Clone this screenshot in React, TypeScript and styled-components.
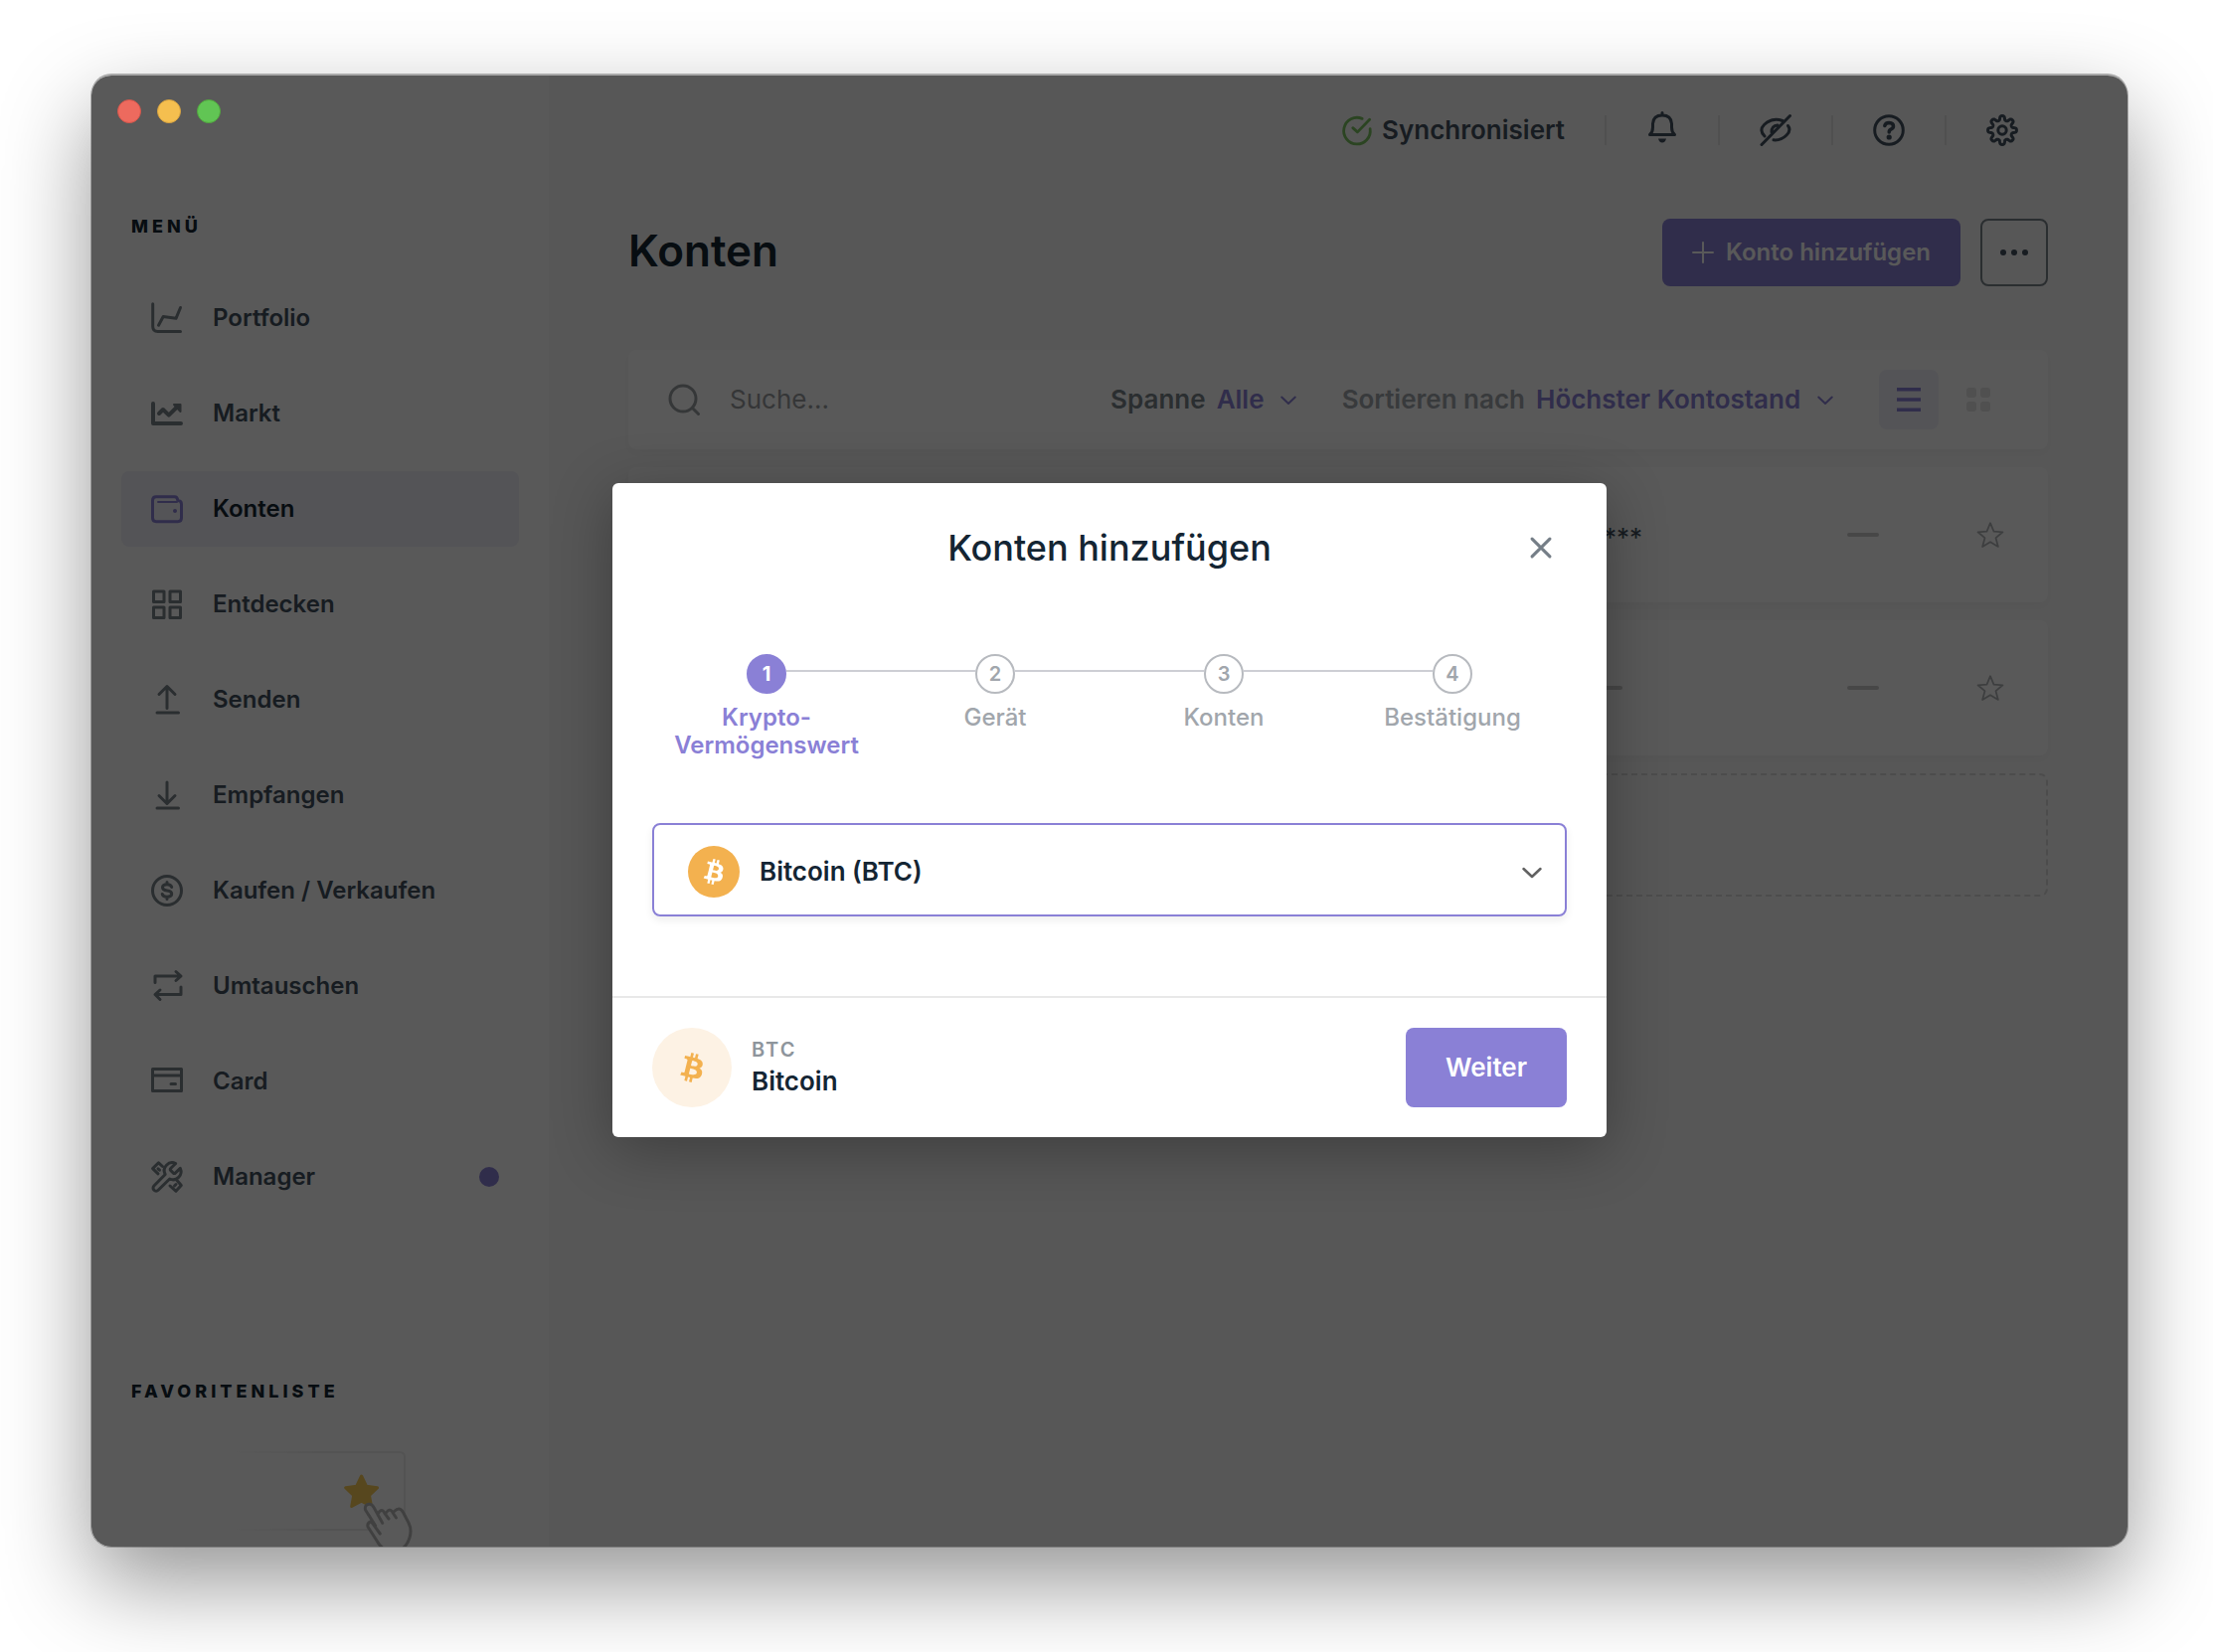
import React from "react";
import styled, { createGlobalStyle, css } from "styled-components";

const color = {
  text: "#142533",
  menu: "#435160",
  soft: "#7a838a",
  muted: "#a1a6ac",
  purple: "#8a80d6",
  tint: "#f0f0f8",
  line: "#e4e4e4",
  orange: "#f3b14f",
};

const GlobalStyle = createGlobalStyle`
  *, *::before, *::after { box-sizing: border-box; }
  body {
    margin: 0;
    background: #fff;
    color: ${color.text};
    font-family: Inter, "Liberation Sans", sans-serif;
    font-size: 26px;
    line-height: 32px;
  }
  h1, h2, p, ul, ol { margin: 0; padding: 0; }
  ul, ol { list-style: none; }
  button, input, select { font: inherit; color: inherit; border: 0; padding: 0; background: none; }
  button, select { cursor: pointer; }
  svg { display: block; flex: none; overflow: visible; }
`;

/* ---------- window ---------- */

const Desktop = styled.div`
  display: flex;
  height: 100vh;
  padding: 76px 86px 106px 92px;
`;

const Window = styled.div`
  position: relative;
  flex: 1;
  min-width: 0;
  display: flex;
  overflow: hidden;
  border-radius: 20px;
  background: #f9f9f9;
  box-shadow: 0 -2px 0 #a9a9a9, 0 0 0 1px rgba(0, 0, 0, 0.25), 0 36px 90px rgba(0, 0, 0, 0.42);
`;

const Backdrop = styled.div`
  position: absolute;
  inset: 0;
  z-index: 1;
  display: grid;
  place-items: center;
  padding-bottom: 2px;
  background: rgba(0, 0, 0, 0.65);
`;

const TrafficLights = styled.div`
  position: relative;
  z-index: 2;
  display: flex;
  gap: 16px;
  padding: 24px 26px 0;
`;

const Light = styled.button<{ $fill: string; $edge: string }>`
  width: 24px;
  height: 24px;
  border-radius: 50%;
  background: ${(p) => p.$fill};
  border: 1px solid ${(p) => p.$edge};
`;

/* ---------- sidebar ---------- */

const Sidebar = styled.aside`
  flex: none;
  width: 460px;
  display: flex;
  flex-direction: column;
  background: #fff;
`;

const SideHeading = styled.h2`
  padding-left: 40px;
  font-size: 18px;
  line-height: 24px;
  font-weight: 800;
  letter-spacing: 4px;
  text-transform: uppercase;
`;

const MenuSection = styled.nav`
  display: flex;
  flex-direction: column;
  gap: 42px;
  margin-top: 92px;
`;

const Menu = styled.ul`
  display: flex;
  flex-direction: column;
  gap: 20px;
  padding: 0 30px;
`;

const MenuLink = styled.a<{ $active?: boolean }>`
  display: flex;
  align-items: center;
  gap: 30px;
  height: 76px;
  padding: 0 20px 0 30px;
  border-radius: 8px;
  font-size: 24px;
  font-weight: 600;
  text-decoration: none;
  color: ${color.menu};
  svg { color: ${color.soft}; }
  ${(p) =>
    p.$active &&
    css`
      background: ${color.tint};
      color: ${color.text};
      svg { color: ${color.purple}; }
    `}
`;

const UpdateDot = styled.span`
  width: 20px;
  height: 20px;
  margin-left: auto;
  border-radius: 50%;
  background: ${color.purple};
`;

const Favorites = styled.section`
  display: flex;
  flex-direction: column;
  gap: 40px;
  margin-top: 166px;
  > svg { align-self: center; }
`;

/* ---------- main area ---------- */

const Main = styled.main`
  flex: 1;
  min-width: 0;
  display: flex;
  flex-direction: column;
`;

const TopBar = styled.header`
  display: flex;
  align-items: center;
  justify-content: flex-end;
  height: 110px;
  padding-right: 70px;
  color: ${color.menu};
`;

const SyncState = styled.div`
  display: flex;
  align-items: center;
  gap: 10px;
  margin-right: 40px;
  font-weight: 600;
  svg { color: #7cc462; }
`;

const TopButton = styled.button`
  display: flex;
  align-items: center;
  width: 114px;
  height: 48px;
  &::before {
    content: "";
    width: 2px;
    height: 30px;
    background: ${color.line};
  }
  svg { margin: 0 auto; }
`;

const Content = styled.div`
  display: flex;
  flex-direction: column;
  gap: 18px;
  padding: 34px 80px 0;
`;

const TitleRow = styled.div`
  display: flex;
  align-items: center;
  gap: 20px;
  margin-bottom: 46px;
`;

const PageTitle = styled.h1`
  flex: 1;
  padding-bottom: 4px;
  font-size: 44px;
  line-height: 56px;
  font-weight: 600;
`;

const AddButton = styled.button`
  display: flex;
  align-items: center;
  gap: 12px;
  height: 68px;
  padding: 0 30px;
  border-radius: 8px;
  background: ${color.purple};
  color: #fff;
  font-size: 24px;
  font-weight: 600;
`;

const MoreButton = styled.button`
  display: grid;
  place-items: center;
  width: 68px;
  height: 68px;
  border: 2px solid ${color.soft};
  border-radius: 8px;
  color: ${color.menu};
`;

const card = css`
  border-radius: 8px;
  background: #fff;
  box-shadow: 0 4px 10px rgba(0, 0, 0, 0.03);
`;

const FilterBar = styled.div`
  ${card}
  display: flex;
  align-items: center;
  height: 100px;
  padding: 0 40px;
`;

const Search = styled.label`
  flex: 1;
  min-width: 0;
  display: flex;
  align-items: center;
  gap: 30px;
  color: #999da0;
`;

const SearchInput = styled.input`
  flex: 1;
  min-width: 0;
  outline: none;
  &::placeholder { color: #999c9f; opacity: 1; }
`;

const Filter = styled.label<{ $muted?: boolean }>`
  display: flex;
  align-items: center;
  gap: 11px;
  margin-right: 46px;
  font-weight: 600;
  color: ${(p) => (p.$muted ? color.muted : color.soft)};
`;

const FilterValue = styled.span`
  display: flex;
  align-items: center;
  gap: 16px;
  color: ${color.purple};
`;

const PlainSelect = styled.select`
  appearance: none;
  outline: none;
  font-weight: 600;
`;

const ViewToggle = styled.div`
  display: flex;
  gap: 10px;
`;

const ViewButton = styled.button<{ $active?: boolean }>`
  display: grid;
  place-items: center;
  width: 60px;
  height: 60px;
  border-radius: 8px;
  background: ${(p) => (p.$active ? color.tint : "transparent")};
  color: ${(p) => (p.$active ? color.purple : color.line)};
`;

const AccountRow = styled.div`
  ${card}
  display: grid;
  grid-template-columns: 1fr 258px 130px 28px;
  align-items: center;
  height: 136px;
  padding-right: 44px;
  > :first-child { grid-column: 2; }
`;

const Balance = styled.span`
  padding-top: 6px;
  color: ${color.menu};
`;

const Dash = styled.span`
  display: block;
  width: 32px;
  height: 4px;
  border-radius: 2px;
  background: #cbcbcb;
`;

const StarButton = styled.button`
  grid-column: 4;
  color: #b0b3b6;
`;

const EmptySlot = styled.div`
  height: 124px;
  border: 2px dashed #dadada;
  border-radius: 8px;
`;

/* ---------- dialog ---------- */

const Dialog = styled.section`
  width: 1000px;
  max-width: 90%;
  border-radius: 6px;
  background: #fff;
  box-shadow: 0 12px 60px rgba(0, 0, 0, 0.3);
`;

const DialogHeader = styled.header`
  display: grid;
  grid-template-columns: 1fr auto 1fr;
  align-items: center;
  height: 130px;
  padding: 0 46px;
`;

const DialogTitle = styled.h2`
  grid-column: 2;
  font-size: 36px;
  line-height: 44px;
  font-weight: 500;
`;

const CloseButton = styled.button`
  justify-self: end;
  display: grid;
  place-items: center;
  width: 40px;
  height: 40px;
  color: #757e87;
`;

const DialogBody = styled.div`
  display: flex;
  flex-direction: column;
  gap: 64px;
  padding: 42px 40px 80px;
`;

const Steps = styled.ol`
  display: grid;
  grid-template-columns: repeat(4, 1fr);
`;

const StepItem = styled.li<{ $active?: boolean }>`
  display: grid;
  grid-template-columns: 1fr 40px 1fr;
  align-content: start;
  row-gap: 10px;
  color: ${(p) => (p.$active ? color.purple : color.muted)};
  font-size: 24px;
  line-height: 28px;
  font-weight: ${(p) => (p.$active ? 600 : 500)};
  text-align: center;
  &::before,
  &::after {
    content: "";
    grid-row: 1;
    height: 2px;
    margin-top: 16px;
    background: #cdced4;
  }
  &::before { grid-column: 1; }
  &::after { grid-column: 3; }
  &:first-child::before,
  &:last-child::after { background: transparent; }
`;

const StepNumber = styled.span<{ $active?: boolean }>`
  grid-column: 2;
  grid-row: 1;
  display: grid;
  place-items: center;
  height: 40px;
  border: 2px solid ${(p) => (p.$active ? color.purple : "#b7babf")};
  border-radius: 50%;
  background: ${(p) => (p.$active ? color.purple : "#fff")};
  color: ${(p) => (p.$active ? "#fff" : color.muted)};
  font-size: 20px;
  font-weight: ${(p) => (p.$active ? 700 : 600)};
`;

const StepLabel = styled.span`
  grid-column: 1 / -1;
`;

const CurrencyField = styled.label`
  display: flex;
  align-items: center;
  gap: 20px;
  height: 94px;
  padding: 4px 23px 0 34px;
  border: 2px solid ${color.purple};
  border-radius: 8px;
  box-shadow: 0 4px 8px rgba(0, 0, 0, 0.07);
  > svg { color: #616161; }
`;

const CurrencySelect = styled(PlainSelect)`
  flex: 1;
  min-width: 0;
  height: 60px;
`;

const Coin = styled.span<{ $size: number; $soft?: boolean }>`
  flex: none;
  display: grid;
  place-items: center;
  width: ${(p) => p.$size}px;
  height: ${(p) => p.$size}px;
  border-radius: 50%;
  background: ${(p) => (p.$soft ? "#fdf2e4" : color.orange)};
  color: ${(p) => (p.$soft ? color.orange : "#fff")};
`;

const DialogFooter = styled.footer`
  display: flex;
  align-items: center;
  gap: 20px;
  padding: 30px 40px;
  border-top: 2px solid #e8e8e8;
`;

const CoinInfo = styled.div`
  flex: 1;
  display: flex;
  flex-direction: column;
  gap: 4px;
`;

const Ticker = styled.p`
  font-size: 20px;
  line-height: 24px;
  font-weight: 600;
  letter-spacing: 2px;
  color: #8e959c;
`;

const CoinName = styled.p`
  font-weight: 600;
`;

const PrimaryButton = styled.button`
  height: 80px;
  padding: 0 40px;
  border-radius: 8px;
  background: ${color.purple};
  color: #fff;
  font-weight: 600;
`;

/* ---------- icons ---------- */

type IconProps = { size?: number; stroke?: number; children: React.ReactNode };

const Icon = ({ size = 32, stroke = 3, children }: IconProps) => (
  <svg
    width={size}
    height={size}
    viewBox="0 0 32 32"
    fill="none"
    stroke="currentColor"
    strokeWidth={stroke}
    strokeLinecap="round"
    strokeLinejoin="round"
    aria-hidden="true"
  >
    {children}
  </svg>
);

const PortfolioIcon = () => (
  <Icon>
    <path d="M1.7 1.7V24.500q0 5 5 5H29.500M7.500 23.300 12.200 14.500 25 16.300 29.500 5.500" />
  </Icon>
);
const MarketIcon = () => (
  <Icon stroke={4}>
    <path d="M2 6V26H30M8 16 12 12 17.800 17.600 25 10.500" />
    <path d="M23 7H29.500V14Z" strokeWidth={2} fill="currentColor" />
  </Icon>
);
const WalletIcon = () => (
  <Icon>
    <path d="M5.200 3.700H23.500Q26.500 3.700 26.800 7.500Q30.500 7.700 30.500 11.200V25Q30.500 28.700 26.800 28.700H5.200Q1.500 28.700 1.500 25V7.400Q1.500 3.700 5.200 3.700Z" />
    <path d="M7 8.900H26" strokeWidth={2} />
    <circle cx="24" cy="18" r="2" fill="currentColor" stroke="none" />
  </Icon>
);
const DiscoverIcon = () => (
  <Icon>
    <path d="M2.500 3H13V13.500H2.500ZM19 3H29.500V13.500H19ZM2.500 19H13V29.500H2.500ZM19 19H29.500V29.500H19Z" />
  </Icon>
);
const SendIcon = () => (
  <Icon>
    <path d="M16 2.500V24.500M8 10.500 16 2.500 24 10.500M6 29H27.500" />
  </Icon>
);
const ReceiveIcon = () => (
  <Icon>
    <path d="M16 3V24.500M8 16.500 16 24.500 24 16.500M6 29H27.500" />
  </Icon>
);
const DollarIcon = () => (
  <Icon>
    <circle cx="16" cy="16" r="14.500" />
    <path d="M20.700 12.500Q20 9.800 16 9.800Q11.500 9.800 11.500 12.800Q11.500 15.500 16 16Q20.700 16.500 20.700 19.300Q20.700 22.200 16 22.200Q11.800 22.200 11.200 19.400M16 7.500V9.500M16 22.500V24.500" />
  </Icon>
);
const SwapIcon = () => (
  <Icon>
    <path d="M4 12.500V6H30M25 1.500 30 6 25 10.500M30 17V24.500H4M9 20 4 24.500 9 29.500" />
  </Icon>
);
const CardIcon = () => (
  <Icon>
    <path d="M1.500 3.500H30.500V25.500H1.500ZM1.500 10H30.500M20 18.500H24.500" />
  </Icon>
);
const ToolsIcon = () => (
  <Icon stroke={3}>
    <path d="M19.600 7.500a1.300 1.300 0 0 0 0 1.900l2.800 2.800a1.300 1.300 0 0 0 1.900 0l5-4.800a8 8 0 0 1-10.600 10.600L7.200 29.300a3 3 0 0 1-4.300-4.300L14.200 13.500A8 8 0 0 1 24.700 2.500Z" />
    <path d="M11.500 5.500 7.500 1.800 1.600 7.600 7 12.800M7 7.800 8.500 9.200M26 19.500 30.300 24.500 25 30.300 19 25M23.500 25 25 23.500" />
  </Icon>
);
const CheckIcon = () => (
  <Icon size={30}>
    <path d="M21.500 3.600A14.200 14.200 0 1 0 30 14.500M11.500 13.500 16.500 18 29.500 4.500" />
  </Icon>
);
const BellIcon = () => (
  <Icon>
    <path d="M3.500 20.500Q6.500 18 6.500 13V9.500Q7 1 16 1Q25 1 25.500 9.500V13Q25.500 18 28.500 20.500ZM16 -1.500V0" />
    <path d="M12 24.500H20Q19 28.500 16 28.500Q13 28.500 12 24.500Z" fill="currentColor" stroke="none" />
  </Icon>
);
const EyeOffIcon = () => (
  <Icon>
    <path d="M2 30.500 30.500 1.500M23 6.500Q13 2.500 4.500 10.500Q-1 16 5 22M28.500 11.500Q32 16 27 21Q21.500 26.500 14 25.800M18 11Q12 11.500 12 18" />
  </Icon>
);
const HelpIcon = () => (
  <Icon>
    <circle cx="16" cy="16" r="14.300" />
    <path d="M11.800 11.500Q12.500 8.500 16.200 8.500Q20.500 8.700 20.500 12Q20.500 14 18 15.200Q16.200 16 16.200 18" strokeWidth={3.500} />
    <circle cx="16.200" cy="23" r="2.600" fill="currentColor" stroke="none" />
  </Icon>
);

/* Eight rounded teeth around the hub. */
const gearPath = (() => {
  const points: string[] = [];
  for (let i = 0; i < 160; i += 1) {
    const a = (i / 160) * Math.PI * 2;
    const r = 12.3 + 2.2 * Math.tanh(2 * Math.cos(8 * a));
    points.push(`${(16 + r * Math.cos(a)).toFixed(2)} ${(16 + r * Math.sin(a)).toFixed(2)}`);
  }
  return `M${points.join("L")}Z`;
})();

const GearIcon = () => (
  <Icon>
    <path d={gearPath} />
    <circle cx="16" cy="16" r="4.200" />
  </Icon>
);
const PlusIcon = () => (
  <Icon size={22}>
    <path d="M16 1.500V30.500M1.500 16H30.500" />
  </Icon>
);
const DotsIcon = () => (
  <svg width="28" height="6" viewBox="0 0 28 6" fill="currentColor" aria-hidden="true">
    <circle cx="3" cy="3" r="3" />
    <circle cx="14" cy="3" r="3" />
    <circle cx="25" cy="3" r="3" />
  </svg>
);
const SearchIcon = () => (
  <Icon>
    <circle cx="15" cy="15" r="13" />
    <path d="M24.500 24.500 30.500 30.500" />
  </Icon>
);
const Chevron = ({ width = 16 }: { width?: number }) => (
  <svg width={width} height={width / 2} viewBox="0 0 20 10" fill="none" stroke="currentColor" strokeWidth="2.500" strokeLinecap="round" strokeLinejoin="round" aria-hidden="true">
    <path d="M1.500 2 10 10 18.500 2" />
  </svg>
);
const ListIcon = () => (
  <svg width="24" height="24" viewBox="0 0 24 24" fill="currentColor" aria-hidden="true">
    <path d="M0 0H24V3.500H0ZM0 10.300H24V13.800H0ZM0 20.500H24V24H0Z" />
  </svg>
);
const GridIcon = () => (
  <svg width="24" height="24" viewBox="0 0 24 24" fill="currentColor" aria-hidden="true">
    <rect width="10" height="10" rx="3" />
    <rect x="14" width="10" height="10" rx="3" />
    <rect y="14" width="10" height="10" rx="3" />
    <rect x="14" y="14" width="10" height="10" rx="3" />
  </svg>
);
const starPath = "M16 2.500 20 12.200 30.300 12.900 22.300 19.600 25 29.700 16 24.200 7 29.700 9.700 19.600 1.700 12.900 12 12.200Z";
const StarIcon = () => (
  <Icon size={28} stroke={2}>
    <path d={starPath} />
  </Icon>
);
const CloseIcon = () => (
  <Icon size={22} stroke={4.5}>
    <path d="M3 3 29 29M29 3 3 29" />
  </Icon>
);
const BitcoinGlyph = ({ size }: { size: number }) => (
  <svg width={size} height={size} viewBox="0 0 32 32" fill="currentColor" aria-hidden="true">
    <path d="M23.189 14.02c.314-2.096-1.283-3.223-3.465-3.975l.708-2.84-1.728-.43-.69 2.765c-.454-.114-.92-.22-1.385-.326l.695-2.783L15.596 6l-.708 2.839c-.376-.086-.746-.17-1.104-.26l.002-.009-2.384-.595-.46 1.846s1.283.294 1.256.312c.7.175.826.638.805 1.006l-.806 3.235c.048.012.11.03.18.057l-.183-.045-1.13 4.532c-.086.212-.303.531-.793.41.018.025-1.256-.313-1.256-.313l-.858 1.978 2.25.561c.418.105.828.215 1.231.318l-.715 2.872 1.727.43.708-2.84c.472.127.93.245 1.378.357l-.706 2.828 1.728.43.715-2.866c2.948.558 5.164.333 6.097-2.333.752-2.146-.037-3.385-1.588-4.192 1.13-.26 1.98-1.003 2.207-2.538zm-3.95 5.538c-.533 2.147-4.148.986-5.32.695l.95-3.805c1.172.293 4.929.872 4.37 3.11zm.535-5.569c-.487 1.953-3.495.96-4.47.717l.86-3.45c.975.243 4.118.696 3.61 2.733z" />
  </svg>
);

const FavoritesArt = () => (
  <svg width="200" height="130" viewBox="0 0 200 130" fill="none" aria-hidden="true">
    <defs>
      <linearGradient id="fade" gradientUnits="userSpaceOnUse" x1="10" y1="0" x2="100" y2="0">
        <stop offset="0" stopColor="#f0f0f0" stopOpacity="0" />
        <stop offset="1" stopColor="#ededed" />
      </linearGradient>
    </defs>
    <path d="M10 9H180Q185 9 185 14V82Q185 87 180 87H10" stroke="url(#fade)" strokeWidth="2" />
    <path
      d="M141.600 33 146.500 43.200 157.600 44.700 149.500 52.500 151.500 63.500 141.600 58.200 131.700 63.500 133.700 52.500 125.600 44.700 136.700 43.200Z"
      fill="#f8cc58"
      stroke="#f8cc58"
      strokeWidth="3"
      strokeLinejoin="round"
    />
    <path
      d="M155.700 83 145.500 67Q144.500 62 149 61.300Q152 61 154 64.500L158.500 70Q163 64.500 166.500 69.500Q170.500 64.500 174.500 68.500Q180 63 184 70L189 80Q192.500 87 190 95Q186 108 174 109Q163 109 157 98L148 84Q147 80 151.300 78.700Z"
      fill="#fff"
    />
    <path
      d="M155.700 83 145.500 67Q144.500 62 149 61.300Q152 61 154 64.500L162.700 80.300M158.500 70.500Q162 64.500 165 70.500L169 76M166.300 70Q170.500 64 173.500 70.500L176.500 75M174.500 68.500Q180 63 183.500 69.500L189 80Q192.500 87 190 95Q186 108 174 109Q163 109 157 98L148 84Q147 80 151.300 78.700L160.300 91"
      stroke="#b8b8b8"
      strokeWidth="3"
      strokeLinecap="round"
      strokeLinejoin="round"
    />
  </svg>
);

/* ---------- data ---------- */

const menu = [
  { label: "Portfolio", icon: PortfolioIcon },
  { label: "Markt", icon: MarketIcon },
  { label: "Konten", icon: WalletIcon, active: true },
  { label: "Entdecken", icon: DiscoverIcon },
  { label: "Senden", icon: SendIcon },
  { label: "Empfangen", icon: ReceiveIcon },
  { label: "Kaufen / Verkaufen", icon: DollarIcon },
  { label: "Umtauschen", icon: SwapIcon },
  { label: "Card", icon: CardIcon },
  { label: "Manager", icon: ToolsIcon, update: true },
];

const steps = ["Krypto-Vermögenswert", "Gerät", "Konten", "Bestätigung"];

export default function App() {
  return (
    <>
      <GlobalStyle />
      <Desktop>
        <Window>
          <Sidebar>
            <TrafficLights>
              <Light $fill="#ed6a5e" $edge="#d5564b" aria-label="Schließen" />
              <Light $fill="#f5bf4f" $edge="#d8a340" aria-label="Minimieren" />
              <Light $fill="#61c554" $edge="#51a73e" aria-label="Maximieren" />
            </TrafficLights>
            <MenuSection>
              <SideHeading>Menü</SideHeading>
              <Menu>
                {menu.map(({ label, icon: ItemIcon, active, update }) => (
                  <li key={label}>
                    <MenuLink href="#" $active={active}>
                      <ItemIcon />
                      {label}
                      {update && <UpdateDot />}
                    </MenuLink>
                  </li>
                ))}
              </Menu>
            </MenuSection>
            <Favorites>
              <SideHeading>Favoritenliste</SideHeading>
              <FavoritesArt />
            </Favorites>
          </Sidebar>

          <Main>
            <TopBar>
              <SyncState>
                <CheckIcon />
                Synchronisiert
              </SyncState>
              <TopButton aria-label="Mitteilungen"><BellIcon /></TopButton>
              <TopButton aria-label="Beträge verbergen"><EyeOffIcon /></TopButton>
              <TopButton aria-label="Hilfe"><HelpIcon /></TopButton>
              <TopButton aria-label="Einstellungen"><GearIcon /></TopButton>
            </TopBar>
            <Content>
              <TitleRow>
                <PageTitle>Konten</PageTitle>
                <AddButton>
                  <PlusIcon />
                  Konto hinzufügen
                </AddButton>
                <MoreButton aria-label="Mehr"><DotsIcon /></MoreButton>
              </TitleRow>
              <FilterBar>
                <Search>
                  <SearchIcon />
                  <SearchInput type="text" placeholder="Suche..." aria-label="Suche" />
                </Search>
                <Filter>
                  Spanne
                  <FilterValue>
                    <PlainSelect><option>Alle</option></PlainSelect>
                    <Chevron />
                  </FilterValue>
                </Filter>
                <Filter $muted>
                  Sortieren nach
                  <FilterValue>
                    <PlainSelect><option>Höchster Kontostand</option></PlainSelect>
                    <Chevron />
                  </FilterValue>
                </Filter>
                <ViewToggle>
                  <ViewButton $active aria-label="Liste"><ListIcon /></ViewButton>
                  <ViewButton aria-label="Raster"><GridIcon /></ViewButton>
                </ViewToggle>
              </FilterBar>
              <AccountRow>
                <Balance>****</Balance>
                <Dash />
                <StarButton aria-label="Favorit"><StarIcon /></StarButton>
              </AccountRow>
              <AccountRow>
                <Dash />
                <Dash />
                <StarButton aria-label="Favorit"><StarIcon /></StarButton>
              </AccountRow>
              <EmptySlot />
            </Content>
          </Main>

          <Backdrop>
            <Dialog role="dialog" aria-labelledby="dialog-title">
              <DialogHeader>
                <DialogTitle id="dialog-title">Konten hinzufügen</DialogTitle>
                <CloseButton aria-label="Schließen"><CloseIcon /></CloseButton>
              </DialogHeader>
              <DialogBody>
                <Steps>
                  {steps.map((label, i) => (
                    <StepItem key={label} $active={i === 0}>
                      <StepNumber $active={i === 0}>{i + 1}</StepNumber>
                      <StepLabel>{label}</StepLabel>
                    </StepItem>
                  ))}
                </Steps>
                <CurrencyField>
                  <Coin $size={52}><BitcoinGlyph size={42} /></Coin>
                  <CurrencySelect aria-label="Krypto-Vermögenswert">
                    <option>Bitcoin (BTC)</option>
                  </CurrencySelect>
                  <Chevron width={20} />
                </CurrencyField>
              </DialogBody>
              <DialogFooter>
                <Coin $size={80} $soft><BitcoinGlyph size={48} /></Coin>
                <CoinInfo>
                  <Ticker>BTC</Ticker>
                  <CoinName>Bitcoin</CoinName>
                </CoinInfo>
                <PrimaryButton>Weiter</PrimaryButton>
              </DialogFooter>
            </Dialog>
          </Backdrop>
        </Window>
      </Desktop>
    </>
  );
}
